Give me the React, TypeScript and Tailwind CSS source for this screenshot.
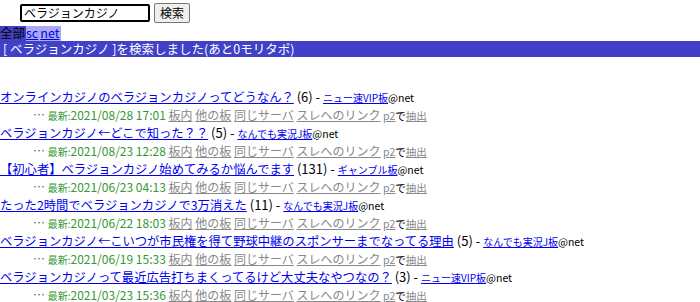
const threads = [
  { title: 'オンラインカジノのベラジョンカジノってどうなん？', count: 6, board: 'ニュー速VIP板', date: '2021/08/28 17:01' },
  { title: 'ベラジョンカジノ←どこで知った？？', count: 5, board: 'なんでも実況J板', date: '2021/08/23 12:28' },
  { title: '【初心者】ベラジョンカジノ始めてみるか悩んでます', count: 131, board: 'ギャンブル板', date: '2021/06/23 04:13' },
  { title: 'たった2時間でベラジョンカジノで3万消えた', count: 11, board: 'なんでも実況J板', date: '2021/06/22 18:03' },
  { title: 'ベラジョンカジノ←こいつが市民権を得て野球中継のスポンサーまでなってる理由', count: 5, board: 'なんでも実況J板', date: '2021/06/19 15:33' },
  { title: 'ベラジョンカジノって最近広告打ちまくってるけど大丈夫なやつなの？', count: 3, board: 'ニュー速VIP板', date: '2021/03/23 15:36' },
];

export default function App() {
  return (
    <div className="min-h-screen bg-white text-black" style={{ fontFamily: '"Noto Sans CJK JP", "Noto Sans", sans-serif' }}>
      <form className="flex items-center gap-[4px] pl-[20px] pt-[2px] h-[23px]">
        <input
          defaultValue="ベラジョンカジノ"
          className="w-[130px] h-[18px] border-2 border-black rounded-[2px] px-[2px] text-[12px] leading-none outline-none"
        />
        <button type="button" className="h-[20px] px-[5px] text-[12px] leading-none border border-[#767676] rounded-[2px] bg-[#efefef]">
          検索
        </button>
      </form>

      <div className="flex mt-[3px] h-[15px] text-[12.5px]">
        <span className="flex items-center bg-[#4040c0] pr-[1px] leading-none">全部</span>
        <a className="flex items-center bg-[#aaaaee] text-[#0000ee] underline pr-[2px] leading-none">sc</a>
        <a className="flex items-center bg-[#aaaaee] text-[#0000ee] underline pr-[2px] leading-none">net</a>
      </div>

      <div className="bg-[#4040c8] text-white text-[12.5px] leading-[16px] h-[16px] pl-[3px]">
        [ ベラジョンカジノ ]を検索しました(あと0モリタポ)
      </div>

      <div className="mt-[29px]">
        {threads.map((t) => (
          <div key={t.date}>
            <div className="h-[18px] leading-[18px] whitespace-nowrap">
              <a className="text-[12.3px] text-[#0000ee] underline">{t.title}</a>
              <span className="text-[13px]"> ({t.count}) - </span>
              <a className="text-[10px] text-[#0000ee] underline">{t.board}</a>
              <span className="text-[10.5px]">@net</span>
            </div>
            <div className="h-[18px] leading-[18px] whitespace-nowrap pl-[33px]">
              <span className="text-[12px] text-[#666666]">… </span>
              <span className="text-[10px] text-[#339933]">最新:</span>
              <span className="text-[12px] text-[#339933]">{t.date}</span>
              <span className="text-[12px] text-[#888888]">
                {' '}
                <a className="underline">板内</a> <a className="underline">他の板</a> <a className="underline">同じサーバ</a>{' '}
                <a className="underline">スレへのリンク</a>
              </span>
              <span className="text-[10.5px] text-[#888888]">
                {' '}
                <a className="underline">p2</a>
                <span className="text-black">で</span>
                <a className="underline">抽出</a>
              </span>
            </div>
          </div>
        ))}
      </div>
    </div>
  );
}
